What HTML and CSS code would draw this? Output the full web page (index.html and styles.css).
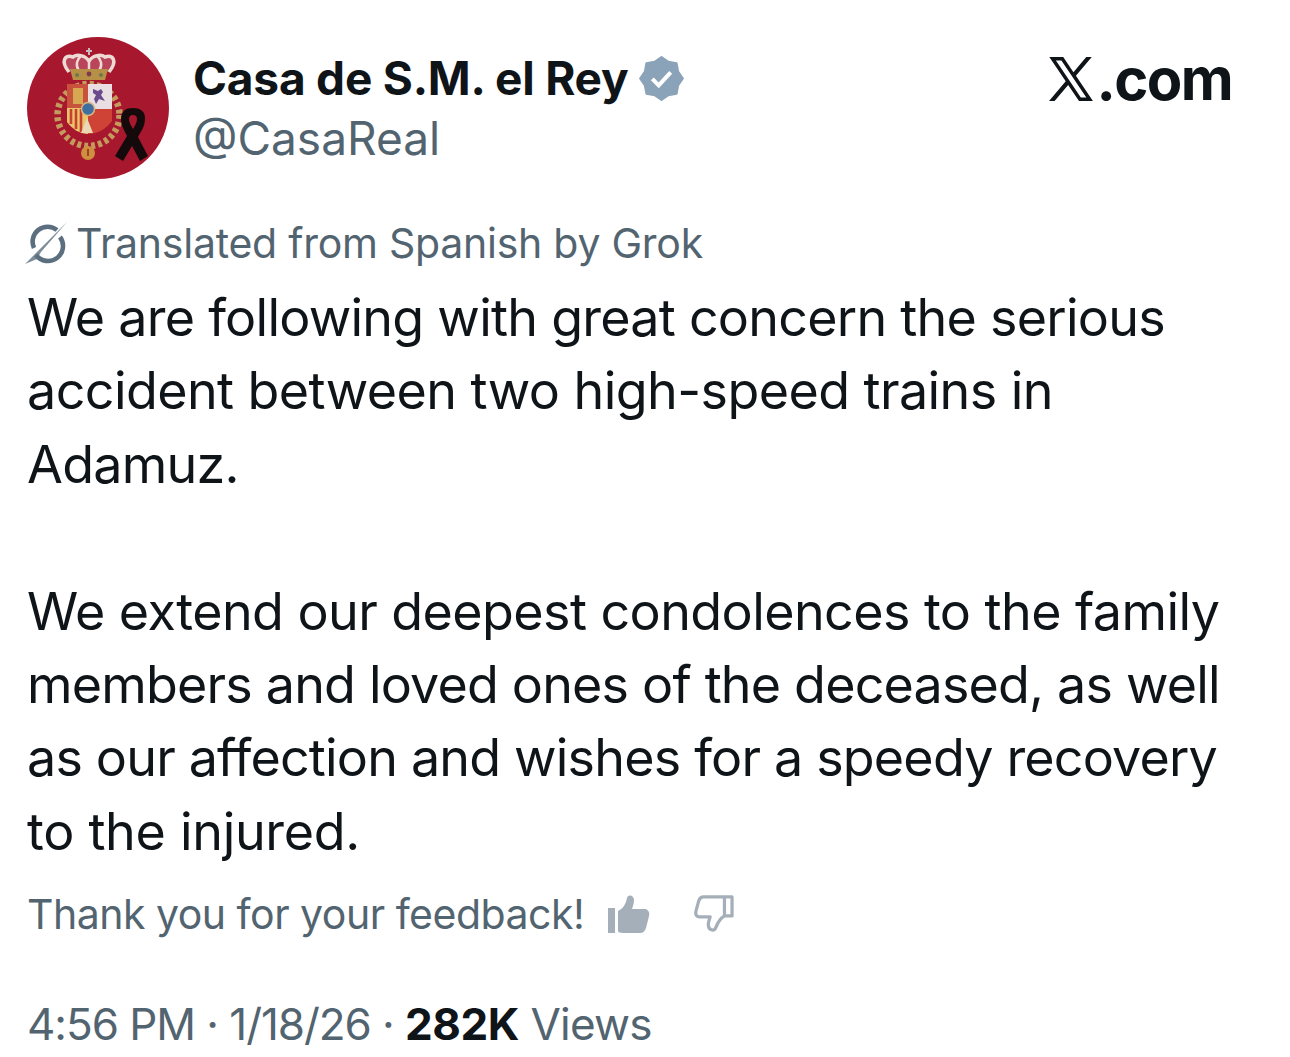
FILE: index.html
```
<!DOCTYPE html>
<html lang="en">
<head>
<meta charset="utf-8">
<title>Casa de S.M. el Rey</title>
<link rel="stylesheet" href="styles.css">
</head>
<body>
<main class="tweet">
  <header class="head">
    <svg class="avatar" viewBox="0 0 142 142" aria-hidden="true">
      <circle cx="71" cy="71" r="71" fill="#a7182e"/>
      <path d="M62 11v7M59 14h6" stroke="#c9b9bb" stroke-width="2"/>
      <path d="M42 35C33 24 38 17 46 20 50 17 58 18 62 24 66 18 74 17 78 20 86 17 91 24 82 35" fill="#b8455a" stroke="#eed9d3" stroke-width="3.5"/>
      <path d="M52 34C48 28 50 22 54 19M62 34V24M72 34C76 28 74 22 70 19" fill="none" stroke="#eed9d3" stroke-width="2.5"/>
      <path d="M43 32h38l-3 11H46z" fill="#b79047"/>
      <circle cx="50" cy="38" r="2" fill="#6b7a4c"/><circle cx="62" cy="37" r="2.4" fill="#7d3a4d"/><circle cx="74" cy="38" r="2" fill="#6b7a4c"/>
      <circle cx="61.5" cy="78" r="31" fill="none" stroke="#c49a5d" stroke-width="6.5" stroke-dasharray="4 3"/>
      <path d="M40 47h21v24H40z" fill="#c9523c"/>
      <path d="M46 51h10v16H46z" fill="#d6a851"/>
      <path d="M61 47h24v25H61z" fill="#e9dfe3"/>
      <path d="M66 52l5 2 3-2 2 3-2 3 4 6-6-2-3 5-2-5 2-4-3-2z" fill="#6a4a8c"/>
      <path d="M40 71h21v26c-8 0-16-5-21-12z" fill="#e9c46a"/>
      <path d="M44 72v15M49 72v20M54 72v23" stroke="#c8402f" stroke-width="2.6"/>
      <path d="M61 72h24v12c-5 7-14 13-24 13z" fill="#cf4336"/>
      <path d="M60 81l6 15H54z" fill="#e9d7b5"/>
      <circle cx="61" cy="72" r="6.5" fill="#3f6ea0" stroke="#d6b67c" stroke-width="1.5"/>
      <circle cx="61" cy="116" r="7" fill="#cf8f3f"/>
      <path d="M61 112v7" stroke="#8a2a1e" stroke-width="1.5"/>
      <path d="M106 71c7 0 12 3 12 10 0 9-4 13-7 19l10 19-8 5-8-15-9 15-8-5 12-20c-3-6-6-11-6-17 0-8 5-11 12-11zm0 7c-3 0-4 2-4 4 0 3 2 7 4 10 2-3 4-7 4-10 0-2-1-4-4-4z" fill="#140a0c" fill-rule="evenodd"/>
    </svg>
    <div class="who">
      <div class="name-row">
        <span class="name">Casa de S.M. el Rey</span>
        <svg class="badge" viewBox="0 0 22 22" aria-hidden="true">
          <path d="M21 11l-2.24 3.21-.69 3.86-3.86.69L11 21l-3.21-2.24-3.86-.69-.69-3.86L1 11l2.24-3.21.69-3.86 3.86-.69L11 1l3.21 2.24 3.86.69.69 3.86z" fill="#8ba3b8" stroke="#8ba3b8" stroke-width="1" stroke-linejoin="round"/>
          <path d="M6.7 11.2l3 3 5.6-6.1" fill="none" stroke="#fff" stroke-width="1.9"/>
        </svg>
      </div>
      <div class="handle">@CasaReal</div>
    </div>
    <div class="brand">
      <svg class="x-logo" viewBox="0 0 24 24" aria-hidden="true">
        <path d="M21.742 21.75l-7.563-11.179 7.056-8.321h-2.456l-5.691 6.714-4.54-6.714H2.359l7.29 10.776L2.25 21.75h2.456l6.035-7.118 4.818 7.118h6.191-.008zM7.739 3.818L18.81 20.182h-2.447L5.29 3.818h2.447z"/>
      </svg><span class="com">.com</span>
    </div>
  </header>

  <div class="translated">
    <svg class="grok" viewBox="0 0 44 44" aria-hidden="true">
      <path d="M33 9A15 15 0 0 0 10 27M12 34A15 15 0 0 0 36 16" fill="none" stroke="#5b6f80" stroke-width="4.6"/>
      <path d="M43 1L1 43l12-5 4-7z" fill="#5b6f80" opacity=".8"/>
    </svg>
    <span>Translated from Spanish by Grok</span>
  </div>

  <div class="body-text">
    <p>We are following with great concern the serious<br><span class="wide">accident between two high-speed trains in</span><br>Adamuz.</p>
    <p><span class="wide">We extend our deepest condolences to the family</span><br><span class="tight">members and loved ones of the deceased, as well</span><br><span class="tight">as our affection and wishes for a speedy recovery</span><br><span class="wider">to the injured.</span></p>
  </div>

  <div class="feedback">
    <span>Thank you for your feedback!</span>
    <svg class="thumb" viewBox="0 0 42 38" aria-hidden="true">
      <path d="M0 13h7v25H0zM10 36V16c6-3 8-8 9-13 1-4 7-3 7 2 0 3-1 6-2 9h12c4 0 6 3 5 7l-3 12c-1 3-3 5-6 5H15c-3 0-5-1-5-2z" fill="#a5afb9"/>
    </svg>
    <svg class="thumb down" viewBox="0 0 42 40" aria-hidden="true">
      <path d="M32 2H10C7 2 6 3 5 6L2 17c-1 4 1 6 4 6h11c-1 3-2 6-2 8 0 6 6 8 8 3 2-5 4-9 9-12zM32 2h8v20h-8" fill="none" stroke="#a5afb9" stroke-width="3.4" stroke-linejoin="round"/>
    </svg>
  </div>

  <div class="meta"><span class="stamp">4:56 PM · 1/18/26 · </span><strong>282K</strong><span class="views"> Views</span></div>
</main>
</body>
</html>
```

FILE: styles.css
```
* { box-sizing: border-box; }
html, body { margin: 0; background: #fff; }
body { width: 1290px; height: 1057px; overflow: hidden; font-family: Inter, "Liberation Sans", sans-serif; color: #0f1419; }
.tweet { padding: 37px 58px 0 27px; display: flex; flex-direction: column; }
.head { display: flex; align-items: flex-start; }
.avatar { width: 142px; height: 142px; flex: none; }
.who { margin-left: 24px; padding-top: 11px; flex: 1; }
.name-row { display: flex; align-items: center; gap: 10px; height: 60px; }
.name { font-size: 46px; font-weight: 700; letter-spacing: -0.2px; line-height: 60px; }
.badge { width: 47px; height: 47px; flex: none; }
.handle { font-size: 46px; line-height: 60px; color: #536471; }
.brand { display: flex; align-items: center; height: 62px; margin-top: 11px; }
.x-logo { width: 54px; height: 54px; fill: #0f1419; margin-right: -2px; }
.com { font-size: 58px; font-weight: 700; letter-spacing: -1.6px; line-height: 62px; }
.translated { display: flex; align-items: center; gap: 8px; margin-top: 35px; height: 58px; font-size: 41px; color: #536471; letter-spacing: -0.25px; }
.grok { width: 44px; height: 44px; flex: none; margin-left: -3px; }
.body-text { font-size: 52px; line-height: 73.4px; letter-spacing: -0.75px; margin-top: 9px; }
.body-text p { margin: 0 0 73.4px; }
.body-text p:last-child { margin-bottom: 0; }
.wide { letter-spacing: -0.57px; }
.tight { letter-spacing: -0.81px; }
.wider { letter-spacing: -0.3px; }
.feedback { display: flex; align-items: center; margin-top: 16px; height: 60px; font-size: 41px; color: #536471; letter-spacing: -0.5px; }
.thumb { width: 42px; height: 38px; margin-left: 24px; flex: none; }
.thumb.down { margin-left: 43px; }
.meta { margin-top: 50px; font-size: 44px; line-height: 60px; color: #536471; letter-spacing: -0.5px; }
.meta strong { color: #0f1419; font-weight: 700; }
.stamp { letter-spacing: -1.05px; }
.views { letter-spacing: -0.75px; }
```
